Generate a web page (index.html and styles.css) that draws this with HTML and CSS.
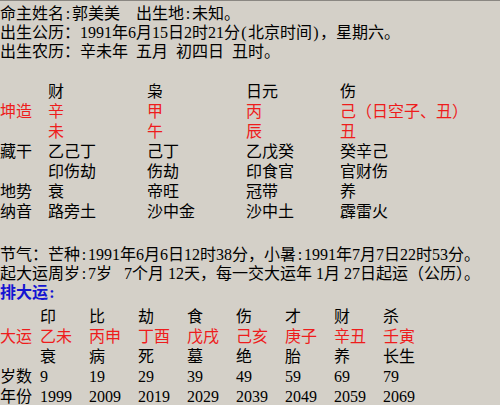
FILE: index.html
```html
<!DOCTYPE html>
<html lang="zh-CN">
<head>
<meta charset="utf-8">
<title>八字排盘</title>
<link rel="stylesheet" href="styles.css">
</head>
<body>
<div class="page">
  <div class="info">
    <div class="line">命主姓名<span class="h">:</span>郭美美<span class="sp2"></span>出生地<span class="h">:</span>未知。</div>
    <div class="line">出生公历：1991年6月15日2时21分<span class="h">(</span>北京时间<span class="h">)</span>，星期六。</div>
    <div class="line">出生农历：辛未年<span class="sp"></span>五月<span class="sp"></span>初四日<span class="sp"></span>丑时。</div>
  </div>

  <div class="pillars">
    <span></span><span>财</span><span>枭</span><span>日元</span><span>伤</span>
    <span class="red">坤造</span><span class="red">辛</span><span class="red">甲</span><span class="red">丙</span><span class="red">己（日空子、丑）</span>
    <span></span><span class="red">未</span><span class="red">午</span><span class="red">辰</span><span class="red">丑</span>
    <span>藏干</span><span>乙己丁</span><span>己丁</span><span>乙戊癸</span><span>癸辛己</span>
    <span></span><span>印伤劫</span><span>伤劫</span><span>印食官</span><span>官财伤</span>
    <span>地势</span><span>衰</span><span>帝旺</span><span>冠带</span><span>养</span>
    <span>纳音</span><span>路旁土</span><span>沙中金</span><span>沙中土</span><span>霹雷火</span>
  </div>

  <div class="info info-2">
    <div class="line">节气：芒种<span class="h">:</span>1991年6月6日12时38分，小暑<span class="h">:</span>1991年7月7日22时53分。</div>
    <div class="line">起大运周岁<span class="h">:</span>7岁<span class="sp3"></span>7个月<span class="sp1"></span>12天，每一交大运年<span class="sp1"></span>1月<span class="sp1"></span>27日起运（公历）。</div>
    <div class="line"><span class="blue">排大运<span class="h">:</span></span></div>
  </div>

  <div class="luck">
    <span></span><span>印</span><span>比</span><span>劫</span><span>食</span><span>伤</span><span>才</span><span>财</span><span>杀</span>
    <span class="red">大运</span><span class="red">乙未</span><span class="red">丙申</span><span class="red">丁酉</span><span class="red">戊戌</span><span class="red">己亥</span><span class="red">庚子</span><span class="red">辛丑</span><span class="red">壬寅</span>
    <span></span><span>衰</span><span>病</span><span>死</span><span>墓</span><span>绝</span><span>胎</span><span>养</span><span>长生</span>
    <span>岁数</span><span>9</span><span>19</span><span>29</span><span>39</span><span>49</span><span>59</span><span>69</span><span>79</span>
    <span>年份</span><span>1999</span><span>2009</span><span>2019</span><span>2029</span><span>2039</span><span>2049</span><span>2059</span><span>2069</span>
  </div>
</div>
</body>
</html>
```

FILE: styles.css
```css
html, body {
  margin: 0;
  padding: 0;
  background: #d4d0c8;
}

body {
  width: 500px;
  height: 405px;
  overflow: hidden;
}

.page {
  border-top: 1px solid #8a8782;
  padding-top: 3px;
  font-family: "Liberation Serif", "Noto Sans CJK SC", serif;
  font-size: 16px;
  color: #000;
}

.line {
  height: 19px;
  line-height: 19px;
  white-space: nowrap;
}

.h {
  display: inline-block;
  width: 8px;
  text-align: center;
}

.sp {
  display: inline-block;
  width: 8px;
}

.sp1 {
  display: inline-block;
  width: 4px;
}

.sp2 {
  display: inline-block;
  width: 16px;
}

.sp3 {
  display: inline-block;
  width: 12px;
}

.pillars {
  display: grid;
  grid-template-columns: 48px 99px 99px 94px 1fr;
  grid-auto-rows: 20px;
  line-height: 20px;
  margin-top: 21px;
  white-space: nowrap;
}

.info-2 {
  margin-top: 23px;
}

.luck {
  display: grid;
  grid-template-columns: 40px repeat(7, 49px) 1fr;
  grid-auto-rows: 20px;
  line-height: 20px;
  margin-top: 5px;
  white-space: nowrap;
}

.red {
  color: #ee1c1c;
}

.blue {
  color: #1414d2;
  font-weight: bold;
}
```
